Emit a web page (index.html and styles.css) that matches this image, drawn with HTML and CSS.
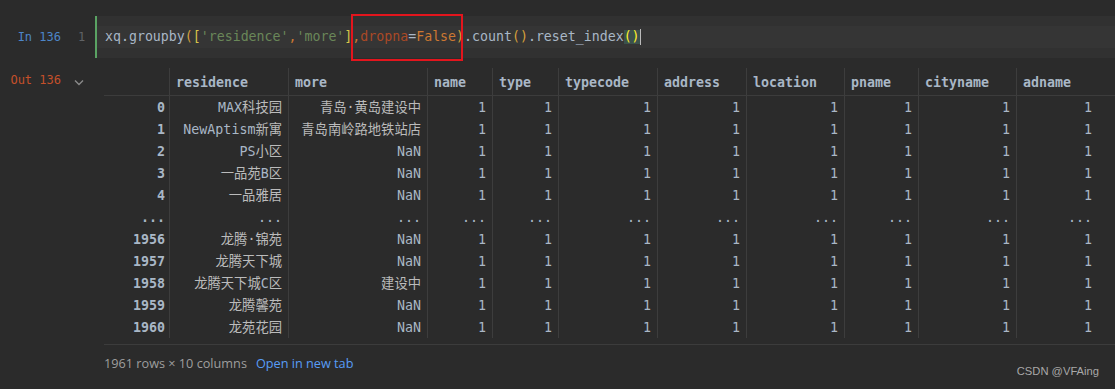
FILE: index.html
```html
<!DOCTYPE html>
<html>
<head>
<meta charset="utf-8">
<link rel="stylesheet" href="styles.css">
</head>
<body>
<div class="page">
  <div class="cell-in">
    <div class="gutter">
      <span class="prompt in">In 136</span>
      <span class="lineno">1</span>
    </div>
    <div class="editor">
      <div class="line"><span class="d">xq.groupby</span><span class="p1">(</span><span class="p2">[</span><span class="s">'residence'</span><span class="k">,</span><span class="s">'more'</span><span class="p2">]</span><span class="k">,</span><span class="n">dropna</span><span class="d">=</span><span class="k">False</span><span class="p1">)</span><span class="d">.count</span><span class="p1">()</span><span class="d">.reset_index</span><span class="match">()</span><span class="caret"></span></div>
    </div>
    <div class="mark"></div>
  </div>

  <div class="cell-out">
    <div class="gutter out-g">
      <span class="prompt out">Out 136</span>
      <svg class="chev" width="10" height="7" viewBox="0 0 10 7"><polyline points="1,1.5 5,5.5 9,1.5" fill="none" stroke="#8a8a8a" stroke-width="1.4"/></svg>
    </div>
    <div class="result">
      <div class="grid-wrap">
        <div class="row head">
          <div class="c idx"></div>
          <div class="c">residence</div>
          <div class="c">more</div>
          <div class="c">name</div>
          <div class="c">type</div>
          <div class="c">typecode</div>
          <div class="c">address</div>
          <div class="c">location</div>
          <div class="c">pname</div>
          <div class="c">cityname</div>
          <div class="c">adname</div>
          <div class="c fill"></div>
        </div>
        <div class="row"><div class="c idx">0</div><div class="c">MAX<span class="zh">科技园</span></div><div class="c zh">青岛·黄岛建设中</div><div class="c">1</div><div class="c">1</div><div class="c">1</div><div class="c">1</div><div class="c">1</div><div class="c">1</div><div class="c">1</div><div class="c">1</div><div class="c fill"></div></div>
        <div class="row"><div class="c idx">1</div><div class="c">NewAptism<span class="zh">新寓</span></div><div class="c zh">青岛南岭路地铁站店</div><div class="c">1</div><div class="c">1</div><div class="c">1</div><div class="c">1</div><div class="c">1</div><div class="c">1</div><div class="c">1</div><div class="c">1</div><div class="c fill"></div></div>
        <div class="row"><div class="c idx">2</div><div class="c">PS<span class="zh">小区</span></div><div class="c">NaN</div><div class="c">1</div><div class="c">1</div><div class="c">1</div><div class="c">1</div><div class="c">1</div><div class="c">1</div><div class="c">1</div><div class="c">1</div><div class="c fill"></div></div>
        <div class="row"><div class="c idx">3</div><div class="c"><span class="zh">一品苑</span>B<span class="zh">区</span></div><div class="c">NaN</div><div class="c">1</div><div class="c">1</div><div class="c">1</div><div class="c">1</div><div class="c">1</div><div class="c">1</div><div class="c">1</div><div class="c">1</div><div class="c fill"></div></div>
        <div class="row"><div class="c idx">4</div><div class="c zh">一品雅居</div><div class="c">NaN</div><div class="c">1</div><div class="c">1</div><div class="c">1</div><div class="c">1</div><div class="c">1</div><div class="c">1</div><div class="c">1</div><div class="c">1</div><div class="c fill"></div></div>
        <div class="row"><div class="c idx">...</div><div class="c">...</div><div class="c">...</div><div class="c">...</div><div class="c">...</div><div class="c">...</div><div class="c">...</div><div class="c">...</div><div class="c">...</div><div class="c">...</div><div class="c">...</div><div class="c fill"></div></div>
        <div class="row"><div class="c idx">1956</div><div class="c zh">龙腾·锦苑</div><div class="c">NaN</div><div class="c">1</div><div class="c">1</div><div class="c">1</div><div class="c">1</div><div class="c">1</div><div class="c">1</div><div class="c">1</div><div class="c">1</div><div class="c fill"></div></div>
        <div class="row"><div class="c idx">1957</div><div class="c zh">龙腾天下城</div><div class="c">NaN</div><div class="c">1</div><div class="c">1</div><div class="c">1</div><div class="c">1</div><div class="c">1</div><div class="c">1</div><div class="c">1</div><div class="c">1</div><div class="c fill"></div></div>
        <div class="row"><div class="c idx">1958</div><div class="c"><span class="zh">龙腾天下城</span>C<span class="zh">区</span></div><div class="c zh">建设中</div><div class="c">1</div><div class="c">1</div><div class="c">1</div><div class="c">1</div><div class="c">1</div><div class="c">1</div><div class="c">1</div><div class="c">1</div><div class="c fill"></div></div>
        <div class="row"><div class="c idx">1959</div><div class="c zh">龙腾馨苑</div><div class="c">NaN</div><div class="c">1</div><div class="c">1</div><div class="c">1</div><div class="c">1</div><div class="c">1</div><div class="c">1</div><div class="c">1</div><div class="c">1</div><div class="c fill"></div></div>
        <div class="row"><div class="c idx">1960</div><div class="c zh">龙苑花园</div><div class="c">NaN</div><div class="c">1</div><div class="c">1</div><div class="c">1</div><div class="c">1</div><div class="c">1</div><div class="c">1</div><div class="c">1</div><div class="c">1</div><div class="c fill"></div></div>
      </div>
      <div class="footer">
        <span class="count">1961 rows × 10 columns</span>
        <span class="link">Open in new tab</span>
      </div>
    </div>
  </div>
  <div class="watermark">CSDN @VFAing</div>
</div>
</body>
</html>
```
FILE: styles.css
```css
* { box-sizing: border-box; }
html, body { margin: 0; padding: 0; }
body { background: #2b2b2b; }
.page {
  position: relative;
  width: 1115px;
  height: 389px;
  overflow: hidden;
  padding-top: 16px;
  font-family: "DejaVu Sans Mono", "Noto Sans CJK SC", monospace;
}
.cell-in {
  position: relative;
  display: flex;
  height: 42px;
}
.gutter {
  width: 95px;
  flex: none;
  display: flex;
  align-items: center;
  font-size: 12px;
}
.prompt {
  width: 61px;
  text-align: right;
  white-space: pre;
}
.prompt.in { color: #4d86c9; }
.prompt.out { color: #c4502a; }
.lineno {
  color: #606366;
  padding-left: 17px;
}
.editor {
  flex: 1;
  background: #313131;
  border-left: 2px solid #5aa363;
  padding: 10px 0;
}
.line {
  height: 22px;
  line-height: 22px;
  background: #353535;
  padding-left: 8px;
  font-size: 13.25px;
  white-space: pre;
  color: #a9b7c6;
  display: flex;
  align-items: center;
}
.d { color: #a9b7c6; }
.s { color: #6a8759; }
.k { color: #cc7832; }
.n { color: #aa4926; }
.p1 { color: #d6a03c; }
.p2 { color: #d8c64a; }
.match {
  color: #ffef28;
  background: #3b514d;
  line-height: 14px;
  height: 14px;
  display: inline-block;
}
.caret {
  display: inline-block;
  width: 1px;
  height: 16px;
  background: #bbbbbb;
}
.mark {
  position: absolute;
  left: 351px;
  top: -2px;
  width: 112px;
  height: 47px;
  border: 2px solid #e3151d;
}
.cell-out {
  display: flex;
  margin-top: 10px;
}
.out-g {
  width: 104px;
  align-items: flex-start;
  padding-top: 1px;
  height: 24px;
  line-height: 22px;
}
.chev {
  margin-left: 13px;
  margin-top: 10px;
}
.result { width: 1011px; }
.grid-wrap {
  padding-bottom: 6px;
  border-bottom: 1px solid #3c3c3c;
}
.row {
  display: grid;
  grid-template-columns: 65px 119px 139px 65px 66px 99px 89px 98px 74px 98px 82px 17px;
  height: 22px;
  font-size: 13.3px;
  color: #a9b7c6;
}
.c {
  border-left: 1px solid #3d3d3d;
  padding: 0 6px 0 6px;
  text-align: right;
  line-height: 24px;
  white-space: nowrap;
  overflow: hidden;
}
.c.idx {
  border-left: none;
  padding-right: 4px;
  font-weight: bold;
}
.c.fill { border-left: none; }
.row.head {
  height: 28px;
  border-bottom: 1px solid #3c3c3c;
  font-weight: bold;
}
.row.head .c {
  text-align: left;
  line-height: 30px;
}
.zh { color: #bbbbbb; }
.footer {
  display: flex;
  gap: 9px;
  padding-top: 9px;
  font-family: "Open Sans", "Noto Sans", sans-serif;
  font-size: 12.7px;
  line-height: 18px;
}
.count { color: #9e9e9e; }
.link { color: #589df6; }
.watermark {
  position: absolute;
  right: 16px;
  top: 365px;
  font-family: "Liberation Sans", "Noto Sans", sans-serif;
  font-size: 11.2px;
  color: #a8a8a8;
}
```
